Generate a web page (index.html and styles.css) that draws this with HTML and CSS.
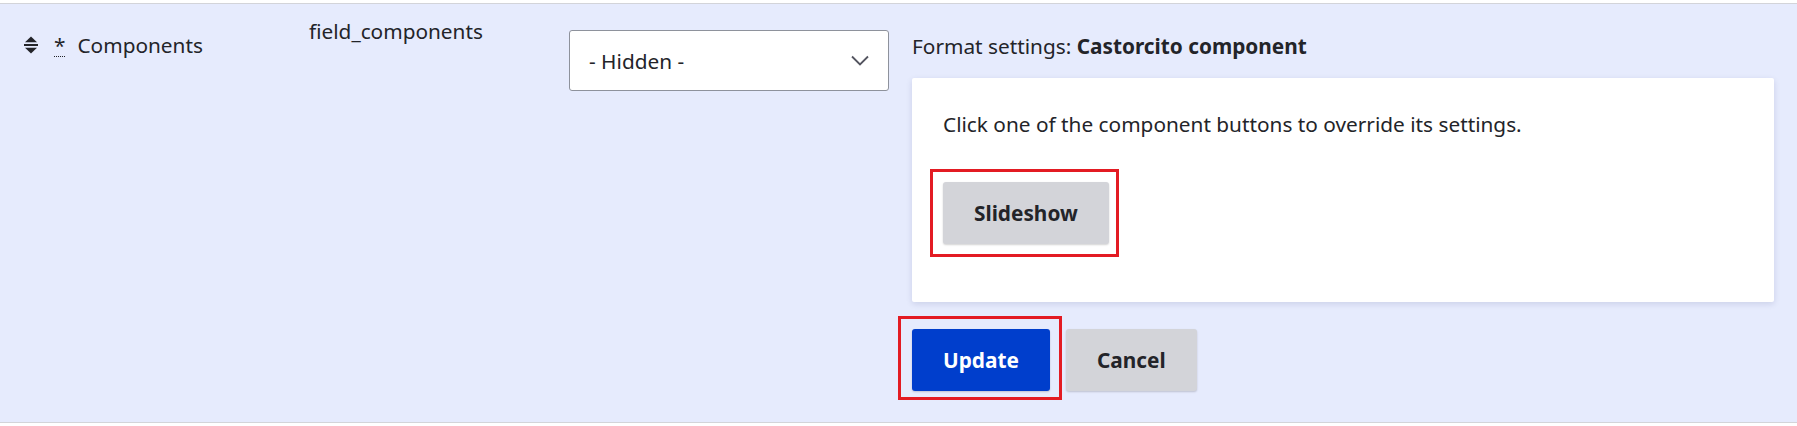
FILE: index.html
```html
<!DOCTYPE html>
<html lang="en">
<head>
    <meta charset="UTF-8">
    <meta name="viewport" content="width=device-width, initial-scale=1.0">
    <title>Manage display</title>
    <link rel="stylesheet" href="styles.css">
</head>
<body>
    <div class="field-table">
        <!-- row being edited -->
        <div class="field-row">
            <div class="cell cell-label">
                <span class="drag-handle">
                    <svg width="14" height="18" viewBox="0 0 14 18">
                        <path d="M7 0.5 L13 6.2 H1 Z" fill="#232429"/>
                        <rect x="0" y="8" width="14" height="2" fill="#232429"/>
                        <path d="M1 11.8 H13 L7 17.5 Z" fill="#232429"/>
                    </svg>
                </span>
                <abbr class="changed" title="Changed">*</abbr>
                <span>Components</span>
            </div>
            <div class="cell cell-machine">field_components</div>
            <div class="cell cell-format">
                <select class="form-select">
                    <option>- Hidden -</option>
                </select>
            </div>
            <div class="cell cell-settings">
                <p class="settings-title">Format settings: <strong>Castorcito component</strong></p>
                <div class="settings-panel">
                    <p>Click one of the component buttons to override its settings.</p>
                    <button class="button marked marked-slideshow" type="button">Slideshow</button>
                </div>
                <div class="form-actions">
                    <button class="button button-primary marked marked-update" type="submit">Update</button>
                    <button class="button" type="button">Cancel</button>
                </div>
            </div>
        </div>
    </div>
</body>
</html>
```

FILE: styles.css
```css
* {
    margin: 0;
    padding: 0;
    box-sizing: border-box;
}

body {
    font-family: "Noto Sans", "Open Sans", sans-serif;
    font-size: 20.8px;
    line-height: 30px;
    color: #232429;
    background: #fff;
}

.field-table {
    padding-top: 3px;
}

.field-row {
    display: grid;
    grid-template-columns: 309px 260px 343px 1fr;
    background: #e6ebfd;
    border-top: 1px solid #d3d4d9;
    border-bottom: 1px solid #d3d4d9;
    padding-right: 23px;
}

.cell-label {
    display: flex;
    align-items: center;
    align-self: start;
    padding: 26px 0 0 24px;
}

.drag-handle {
    display: flex;
    width: 14px;
    margin-right: 16px;
}

.changed {
    text-decoration: underline dotted 1px;
    text-underline-offset: 3px;
    margin-right: 12px;
}

.cell-machine {
    padding-top: 12px;
}

.cell-format {
    padding-top: 26px;
}

.form-select {
    appearance: none;
    width: 320px;
    height: 61px;
    padding: 0 50px 0 19px;
    font: inherit;
    color: #232429;
    background-color: #fff;
    background-image: url("data:image/svg+xml,%3Csvg xmlns='http://www.w3.org/2000/svg' width='18' height='11' viewBox='0 0 18 11'%3E%3Cpath d='M1 1.5l8 8 8-8' fill='none' stroke='%23545560' stroke-width='1.8'/%3E%3C/svg%3E");
    background-repeat: no-repeat;
    background-position: right 19px center;
    border: 1px solid #8e929c;
    border-radius: 3px;
}

.cell-settings {
    padding-top: 27px;
    padding-bottom: 31px;
}

.settings-title {
    margin-bottom: 17px;
}

.settings-panel {
    background: #fff;
    padding: 31px 31px 58px;
    border-radius: 2px;
    box-shadow: 0 2px 6px rgba(0, 20, 80, 0.12);
}

.settings-panel p {
    margin-bottom: 43px;
}

.button {
    height: 62px;
    padding: 0 31px;
    font: inherit;
    font-weight: 700;
    line-height: 20px;
    color: #232429;
    background: #d3d4d9;
    border: none;
    border-radius: 3px;
    box-shadow: 0 1px 2px rgba(0, 0, 0, 0.18);
    cursor: pointer;
}

.button-primary {
    color: #fff;
    background: #003ecc;
}

/* red boxes drawn around the buttons */
.marked {
    position: relative;
}

.marked::after {
    content: "";
    position: absolute;
    border: 3px solid #e31b23;
    pointer-events: none;
}

.marked-slideshow::after {
    inset: -13px -10px -13px -13px;
}

.marked-update::after {
    inset: -13px -12px -9px -14px;
}

.form-actions {
    display: flex;
    gap: 16px;
    margin-top: 27px;
}
```
